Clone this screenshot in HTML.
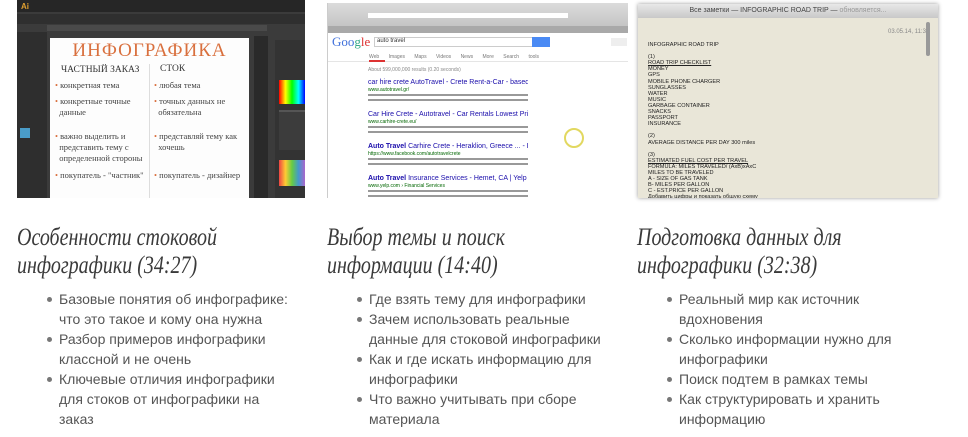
<!DOCTYPE html>
<html><head><meta charset="utf-8"><style>
*{margin:0;padding:0;box-sizing:border-box}
body{width:968px;height:437px;background:#fff;position:relative;overflow:hidden;font-family:"Liberation Sans","DejaVu Sans",sans-serif}
.abs{position:absolute}
h2{position:absolute;font-family:"Liberation Serif","DejaVu Serif",serif;font-style:italic;font-weight:normal;font-size:25px;line-height:28px;color:#3a3a3a;transform:scaleX(0.8);transform-origin:0 0;white-space:nowrap}
ul{position:absolute;list-style:none;font-size:14px;line-height:20px;color:#555}
ul li{position:relative;padding-left:12px}
ul li:before{content:"";position:absolute;left:0;top:8px;width:5px;height:5px;border-radius:50%;background:#777}
.sm{font-size:6px;color:#222;font-family:"Liberation Sans",sans-serif;line-height:6px;white-space:nowrap}
.res{white-space:nowrap;overflow:hidden}
</style></head><body>

<!-- image 1 -->
<div class="abs" style="left:17px;top:0;width:288px;height:198px;background:#3b3b3b;overflow:hidden">
  <div class="abs" style="left:0;top:0;width:288px;height:12px;background:#262626"></div>
  <div class="abs" style="left:4px;top:2px;color:#e0a030;font-size:8px;font-weight:bold">Ai</div>
  <div class="abs" style="left:0;top:14px;width:288px;height:10px;background:#2f2f2f"></div>
  <div class="abs" style="left:30px;top:25px;width:220px;height:6px;background:#4a4a4a"></div>
  <div class="abs" style="left:0;top:32px;width:30px;height:166px;background:#2e2e2e"></div>
  <div class="abs" style="left:3px;top:128px;width:10px;height:10px;background:#4a9cc8"></div>
  <div class="abs" style="left:33px;top:38px;width:199px;height:160px;background:#fdfdfd"></div>
  <div class="abs" style="left:33px;top:40px;width:199px;text-align:center;font-family:'Liberation Serif',serif;font-size:19px;color:#d9703e;letter-spacing:1px">ИНФОГРАФИКА</div>
  <div class="abs" style="left:132px;top:64px;width:1px;height:134px;background:#ddd"></div>
  <div class="abs" style="left:44px;top:64px;font-family:'Liberation Serif',serif;font-size:9.5px;color:#333;line-height:13px">ЧАСТНЫЙ ЗАКАЗ</div>
  <div class="abs" style="left:143px;top:64px;font-family:'Liberation Serif',serif;font-size:9.5px;color:#333">СТОК</div>
  <div class="abs" style="left:38px;top:80px;font-family:'Liberation Serif',serif;font-size:8.5px;color:#444;line-height:11px;width:95px">
    <div style="margin-bottom:5px"><span style="color:#d9703e">•</span> конкретная тема</div>
    <div style="margin-bottom:13px"><span style="color:#d9703e">•</span> конкретные точные<br>&nbsp;&nbsp;данные</div>
    <div style="margin-bottom:6px"><span style="color:#d9703e">•</span> важно выделить и<br>&nbsp;&nbsp;представить тему с<br>&nbsp;&nbsp;определенной стороны</div>
    <div><span style="color:#d9703e">•</span> покупатель - "частник"</div>
  </div>
  <div class="abs" style="left:137px;top:80px;font-family:'Liberation Serif',serif;font-size:8.5px;color:#444;line-height:11px;width:95px">
    <div style="margin-bottom:5px"><span style="color:#d9703e">•</span> любая тема</div>
    <div style="margin-bottom:13px"><span style="color:#d9703e">•</span> точных данных не<br>&nbsp;&nbsp;обязательна</div>
    <div style="margin-bottom:17px"><span style="color:#d9703e">•</span> представляй тему как<br>&nbsp;&nbsp;хочешь</div>
    <div><span style="color:#d9703e">•</span> покупатель - дизайнер</div>
  </div>
  <div class="abs" style="left:237px;top:36px;width:14px;height:162px;background:#2a2a2a"></div>
  <div class="abs" style="left:258px;top:40px;width:30px;height:158px;background:#333"></div>
  <div class="abs" style="left:262px;top:80px;width:26px;height:24px;background:linear-gradient(90deg,#f00,#ff0,#0f0,#0ff,#00f)"></div>
  <div class="abs" style="left:262px;top:110px;width:26px;height:40px;background:#3c3c3c;border-top:2px solid #555"></div>
  <div class="abs" style="left:262px;top:160px;width:26px;height:26px;background:linear-gradient(90deg,#e44,#fc3,#6c4,#49c,#a6c)"></div>
</div>

<!-- image 2 -->
<div class="abs" style="left:327px;top:3px;width:301px;height:195px;background:#fff;overflow:hidden;border-left:1px solid #ccc">
  <div class="abs" style="left:0;top:0;width:301px;height:30px;background:linear-gradient(#dcdcdc,#bdbdbd)"></div>
  <div class="abs" style="left:40px;top:10px;width:200px;height:5px;background:#fff"></div>
  <div class="abs" style="left:0;top:23px;width:301px;height:7px;background:#a9a9a9"></div>
  <div class="abs" style="left:4px;top:31px;font-family:'Liberation Serif',serif;font-size:13px;color:#4272db">Goo<span style="color:#3a8">g</span><span style="color:#d33">le</span></div>
  <div class="abs" style="left:46px;top:34px;width:160px;height:10px;border:1px solid #ccc"></div>
  <div class="abs" style="left:49px;top:35px;font-size:6px;color:#333">auto travel</div>
  <div class="abs" style="left:204px;top:34px;width:18px;height:10px;background:#4a8af4"></div>
  <div class="abs" style="left:283px;top:35px;width:16px;height:8px;background:#eee"></div>
  <div class="abs" style="left:0;top:58px;width:301px;height:1px;background:#e5e5e5"></div>
  <div class="abs" style="left:41px;top:51px;font-size:5px;color:#777;word-spacing:8px">Web Images Maps Videos News More Search tools</div>
  <div class="abs" style="left:41px;top:57px;width:16px;height:2px;background:#d33"></div>
  <div class="abs sm" style="left:40px;top:64px;color:#888;font-size:5px">About 599,000,000 results (0.20 seconds)</div>
  <div class="abs res" style="left:40px;top:75px;width:160px">
    <div style="color:#1a0dab;font-size:7px;line-height:9px">car hire crete AutoTravel - Crete Rent-a-Car - based in ...</div>
    <div style="color:#060;font-size:5px;line-height:6px">www.autotravel.gr/</div>
    <div style="height:11px;background:repeating-linear-gradient(#fff 0 1px,#999 1px 3px,#fff 3px 5px)"></div>
    <div style="height:6px"></div>
    <div style="color:#1a0dab;font-size:7px;line-height:9px">Car Hire Crete - Autotravel - Car Rentals Lowest Prices at ...</div>
    <div style="color:#060;font-size:5px;line-height:6px">www.carhire-crete.eu/</div>
    <div style="height:11px;background:repeating-linear-gradient(#fff 0 1px,#999 1px 3px,#fff 3px 5px)"></div>
    <div style="height:6px"></div>
    <div style="color:#1a0dab;font-size:7px;line-height:9px"><b>Auto Travel</b> Carhire Crete - Heraklion, Greece ... - Facebook</div>
    <div style="color:#060;font-size:5px;line-height:6px">https://www.facebook.com/autotravelcrete</div>
    <div style="height:11px;background:repeating-linear-gradient(#fff 0 1px,#999 1px 3px,#fff 3px 5px)"></div>
    <div style="height:6px"></div>
    <div style="color:#1a0dab;font-size:7px;line-height:9px"><b>Auto Travel</b> Insurance Services - Hemet, CA | Yelp</div>
    <div style="color:#060;font-size:5px;line-height:6px">www.yelp.com › Financial Services</div>
    <div style="height:16px;background:repeating-linear-gradient(#fff 0 1px,#999 1px 3px,#fff 3px 5px)"></div>
    <div style="height:5px"></div>
    <div style="color:#1a0dab;font-size:7px;line-height:9px">Travel Services - <b>Auto</b> Europe</div>
  </div>
  <div class="abs" style="left:236px;top:125px;width:20px;height:20px;border:2px solid #e2d860;border-radius:50%"></div>
</div>

<!-- image 3 -->
<div class="abs" style="left:638px;top:4px;width:300px;height:194px;background:#e9e6d8;overflow:hidden;box-shadow:0 0 4px #999">
  <div class="abs" style="left:0;top:0;width:300px;height:14px;background:linear-gradient(#e8e8e8,#c8c8c8);text-align:center;font-size:7px;line-height:14px;color:#444">Все заметки — INFOGRAPHIC ROAD TRIP — <span style="color:#999">обновляется...</span></div>
  <div class="abs sm" style="left:250px;top:25px;color:#888">03.05.14, 11:32</div>
  <div class="abs" style="left:288px;top:18px;width:4px;height:34px;background:#999;border-radius:2px"></div>
  <div class="abs sm" style="left:10px;top:38px;font-size:5.6px;line-height:6.1px;color:#222">
    <div>INFOGRAPHIC ROAD TRIP</div><div>&nbsp;</div>
    <div>(1)</div><div style="text-decoration:underline">ROAD TRIP CHECKLIST</div>
    <div>MONEY</div><div>GPS</div><div>MOBILE PHONE CHARGER</div><div>SUNGLASSES</div><div>WATER</div><div>MUSIC</div><div>GARBAGE CONTAINER</div><div>SNACKS</div><div>PASSPORT</div><div>INSURANCE</div><div>&nbsp;</div>
    <div>(2)</div><div>AVERAGE DISTANCE PER DAY 300 miles</div><div>&nbsp;</div>
    <div>(3)</div><div style="text-decoration:underline">ESTIMATED FUEL COST PER TRAVEL</div><div>FORMULA: MILES TRAVELED/ (AxB)xAxC</div><div>MILES TO BE TRAVELED</div><div>A - SIZE OF GAS TANK</div><div>B- MILES PER GALLON</div><div>C - EST.PRICE PER GALLON</div><div>Добавить цифры и показать общую схему</div>
  </div>
</div>

<h2 style="left:17px;top:224px">Особенности стоковой<br>инфографики (34:27)</h2>
<h2 style="left:327px;top:224px">Выбор темы и поиск<br>информации (14:40)</h2>
<h2 style="left:637px;top:224px">Подготовка данных для<br>инфографики (32:38)</h2>

<ul style="left:47px;top:289px;width:246px">
<li>Базовые понятия об инфографике: что это такое и кому она нужна</li>
<li>Разбор примеров инфографики классной и не очень</li>
<li>Ключевые отличия инфографики для стоков от инфографики на заказ</li>
</ul>
<ul style="left:357px;top:289px;width:260px">
<li>Где взять тему для инфографики</li>
<li>Зачем использовать реальные данные для стоковой инфографики</li>
<li>Как и где искать информацию для инфографики</li>
<li>Что важно учитывать при сборе материала</li>
</ul>
<ul style="left:667px;top:289px;width:240px">
<li>Реальный мир как источник вдохновения</li>
<li>Сколько информации нужно для инфографики</li>
<li>Поиск подтем в рамках темы</li>
<li>Как структурировать и хранить информацию</li>
</ul>
</body></html>
